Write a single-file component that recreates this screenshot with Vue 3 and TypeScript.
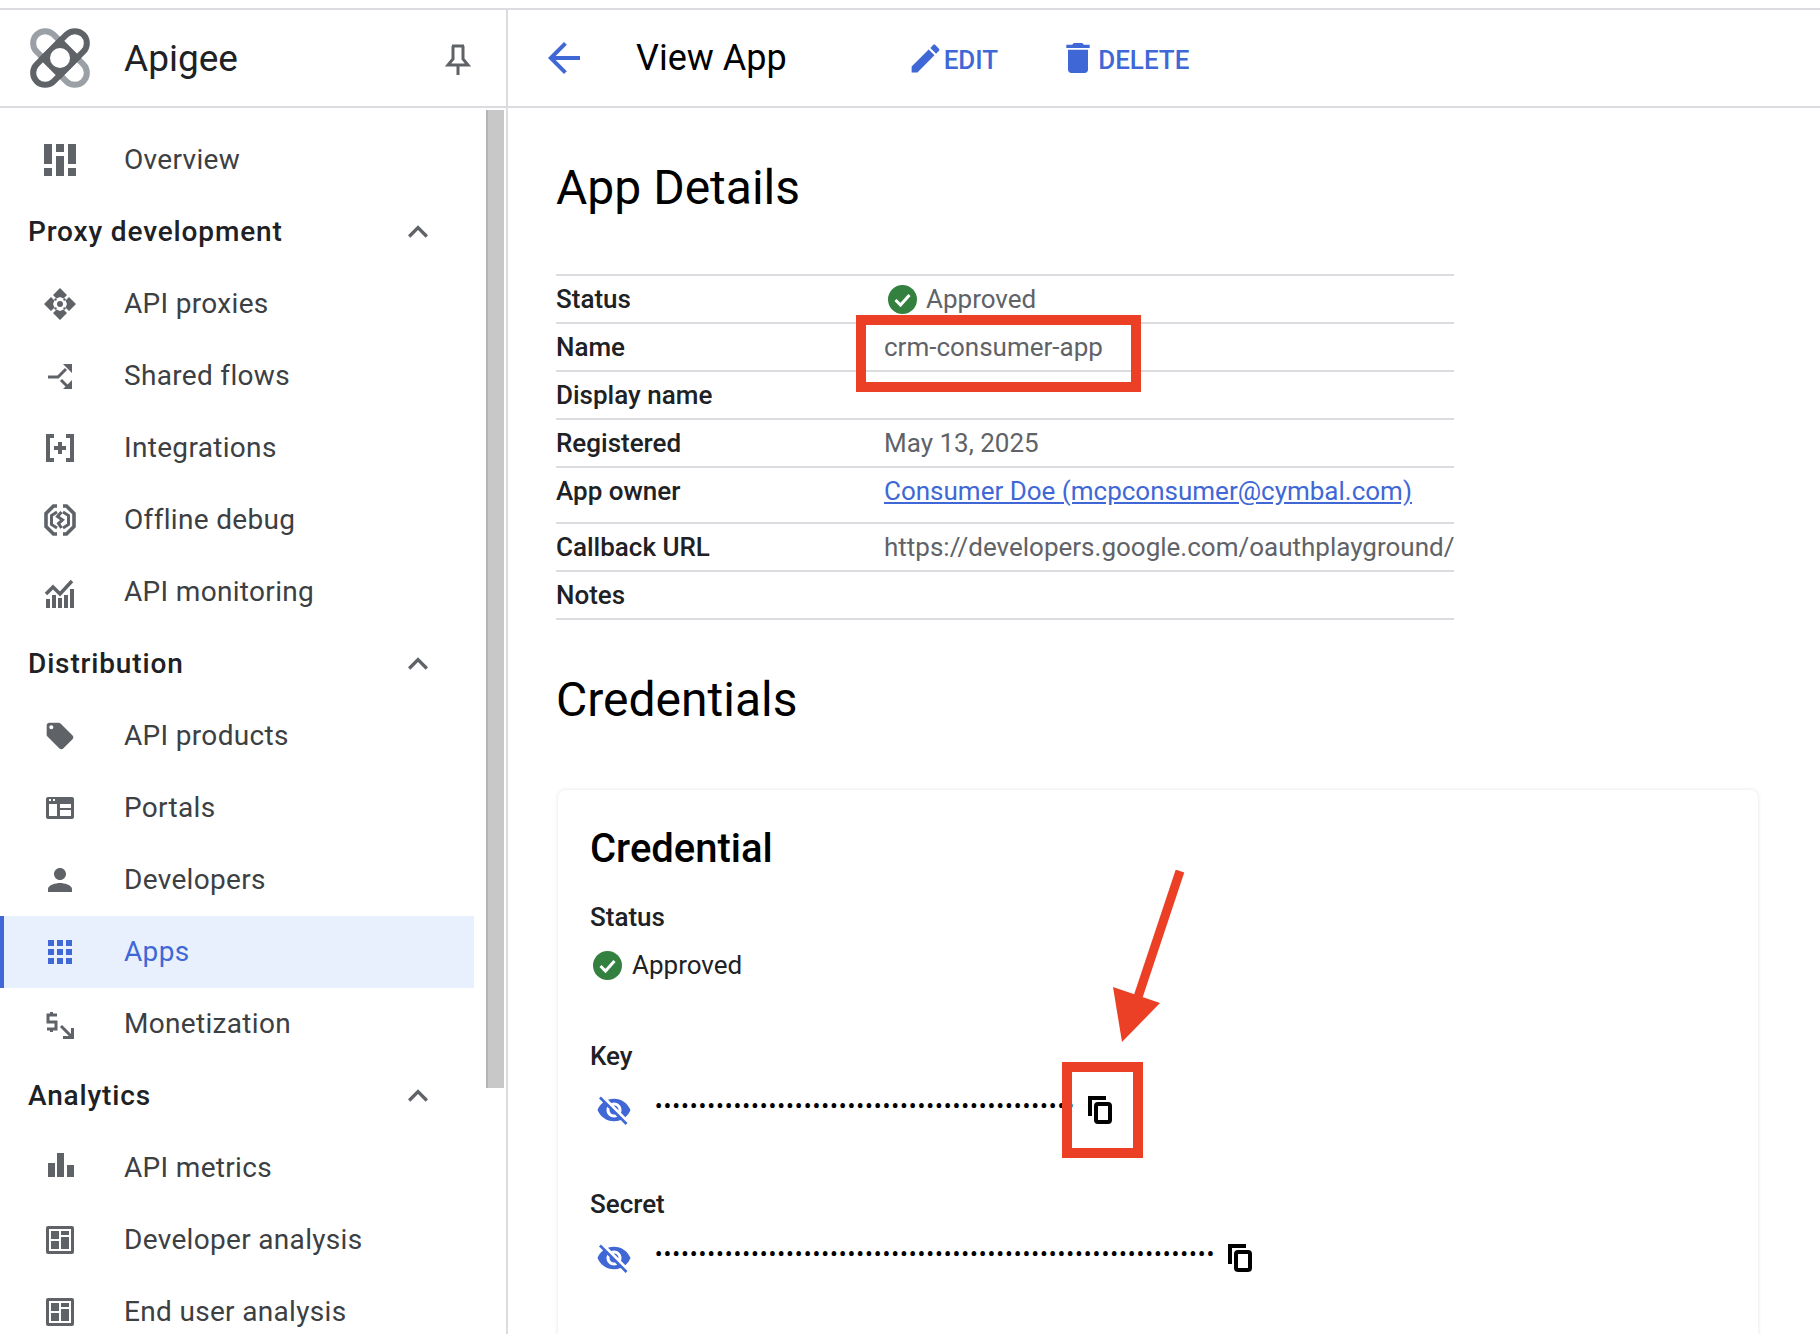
<template>
  <div class="page">
    <div class="layout">
      <aside class="sidenav">
        <div class="brand">
          <svg class="logo" width="60" height="60" viewBox="0 0 60 60" fill="none">
            <rect x="-33" y="-12" width="66" height="24" rx="12" transform="translate(30 30) rotate(45)" stroke="#9aa0a6" stroke-width="6" />
            <rect x="-33" y="-12" width="66" height="24" rx="12" transform="translate(30 30) rotate(-45)" stroke="#5f6368" stroke-width="6" />
            <rect x="-15" y="-15" width="30" height="30" transform="translate(30 30) rotate(45)" fill="#5f6368" />
            <circle cx="30" cy="30" r="10" fill="#fff" />
          </svg>
          <span class="brand-name">Apigee</span>
          <svg class="pin" width="28" height="34" viewBox="0 0 28 34" fill="none" stroke="#5f6368" stroke-width="3">
            <path d="M8 3h12M9 3v13l-5 6h20l-5-6V3M14 22v10" />
          </svg>
        </div>
        <div class="nav-wrap">
          <nav class="nav">
            <template v-for="item in navItems" :key="item.label">
              <div v-if="item.section" class="nav-section">
                <span>{{ item.label }}</span>
                <svg width="40" height="40" viewBox="0 0 24 24" fill="#5f6368">
                  <path d="M12 8l-6 6 1.41 1.41L12 10.83l4.59 4.58L18 14z" />
                </svg>
              </div>
              <div v-else class="nav-item" :class="{ active: item.active }">
                <span class="nav-icon">
                  <svg :width="item.size ?? 32" :height="item.size ?? 32" :viewBox="item.box ?? '0 0 32 32'" fill="currentColor" v-html="item.icon"></svg>
                </span>
                <span class="nav-label">{{ item.label }}</span>
              </div>
            </template>
          </nav>
          <div class="scrollbar"></div>
        </div>
      </aside>

      <main class="main">
        <header class="toolbar">
          <svg class="back" width="48" height="48" viewBox="0 0 24 24" fill="#3f68d6">
            <path d="M20 11H7.83l5.59-5.59L12 4l-8 8 8 8 1.41-1.41L7.83 13H20v-2z" />
          </svg>
          <h2 class="page-title">View App</h2>
          <button class="action edit">
            <svg width="37" height="37" viewBox="0 0 24 24" fill="#3f68d6">
              <path d="M3 17.25V21h3.75L17.81 9.94l-3.75-3.75L3 17.25zM20.71 7.04c.39-.39.39-1.02 0-1.41l-2.34-2.34c-.39-.39-1.02-.39-1.41 0l-1.83 1.83 3.75 3.75 1.83-1.83z" />
            </svg>
            <span>EDIT</span>
          </button>
          <button class="action delete">
            <svg width="40" height="40" viewBox="0 0 24 24" fill="#3f68d6">
              <path d="M6 19c0 1.1.9 2 2 2h8c1.1 0 2-.9 2-2V7H6v12zM19 4h-3.5l-1-1h-5l-1 1H5v2h14V4z" />
            </svg>
            <span>DELETE</span>
          </button>
        </header>

        <section class="content">
          <h1 class="heading first">App Details</h1>
          <div class="details">
            <div v-for="row in detailRows" :key="row.label" class="detail-row" :class="{ tall: row.link }">
              <span class="detail-label">{{ row.label }}</span>
              <span v-if="row.approved" class="detail-value status">
                <svg class="check" width="29" height="29" viewBox="0 0 29 29">
                  <circle cx="14.5" cy="14.5" r="14.5" fill="#34803f" />
                  <path d="M7.5 15l5 5 9-10" fill="none" stroke="#fff" stroke-width="3" />
                </svg>
                {{ row.value }}
              </span>
              <a v-else-if="row.link" class="detail-value owner-link">{{ row.value }}</a>
              <span v-else class="detail-value">{{ row.value }}</span>
            </div>
          </div>

          <h1 class="heading second">Credentials</h1>

          <div class="card">
            <h3 class="card-title">Credential</h3>
            <div class="field-label status-label">Status</div>
            <div class="card-status">
              <svg width="29" height="29" viewBox="0 0 29 29">
                <circle cx="14.5" cy="14.5" r="14.5" fill="#34803f" />
                <path d="M7.5 15l5 5 9-10" fill="none" stroke="#fff" stroke-width="3" />
              </svg>
              Approved
            </div>
            <template v-for="cred in credentials" :key="cred.label">
              <div class="field-label cred-label">{{ cred.label }}</div>
              <div class="cred-row">
                <svg class="eye" width="36" height="36" viewBox="0 0 24 24" fill="#3f68d6">
                  <path d="M12 7c2.76 0 5 2.24 5 5 0 .65-.13 1.26-.36 1.83l2.92 2.92c1.51-1.26 2.7-2.89 3.43-4.75-1.73-4.39-6-7.5-11-7.5-1.4 0-2.74.25-3.98.7l2.16 2.16C10.74 7.13 11.35 7 12 7zM2 4.27l2.28 2.28.46.46C3.08 8.3 1.78 10.02 1 12c1.73 4.39 6 7.5 11 7.5 1.55 0 3.03-.3 4.38-.84l.42.42L19.73 22 21 20.73 3.27 3 2 4.27zM7.53 9.8l1.55 1.55c-.05.21-.08.43-.08.65 0 1.66 1.34 3 3 3 .22 0 .44-.03.65-.08l1.55 1.55c-.67.33-1.41.53-2.2.53-2.76 0-5-2.24-5-5 0-.79.2-1.53.53-2.2zm4.31-.78l3.15 3.15.02-.16c0-1.66-1.34-3-3-3l-.17.01z" />
                </svg>
                <span class="dots">{{ '•'.repeat(cred.dots) }}</span>
                <svg class="copy" width="24" height="28" viewBox="0 0 24 28" fill="none" stroke="#000" stroke-width="4">
                  <path d="M2 20V2h16" />
                  <rect x="8" y="8" width="14" height="18" rx="2" />
                </svg>
              </div>
            </template>
          </div>
        </section>

        <!-- annotations drawn over the screenshot -->
        <div class="mark mark-name"></div>
        <div class="mark mark-copy"></div>
        <svg class="arrow" width="80" height="180" viewBox="0 0 80 180">
          <path d="M67 1L24 130" stroke="#ec4026" stroke-width="9" fill="none" />
          <path d="M0 117L47 133L9 172z" fill="#ec4026" />
        </svg>
      </main>
    </div>
  </div>
</template>

<script setup lang="ts">
interface NavItem {
  label: string
  section?: boolean
  active?: boolean
  icon?: string
  size?: number
  box?: string
}

interface DetailRow {
  label: string
  value: string
  approved?: boolean
  link?: boolean
}

const analysisIcon =
  '<path fill-rule="evenodd" d="M4 2h24a2 2 0 0 1 2 2v24a2 2 0 0 1-2 2H4a2 2 0 0 1-2-2V4a2 2 0 0 1 2-2zM5 5v22h22V5z"/><rect x="7" y="7" width="8" height="8"/><rect x="7" y="17" width="8" height="8"/><rect x="17" y="7" width="8" height="4"/><rect x="17" y="13" width="8" height="12"/>'

const navItems: NavItem[] = [
  {
    label: 'Overview',
    icon: '<rect x="0" y="0" width="8" height="20"/><rect x="0" y="24" width="8" height="8"/><rect x="12" y="0" width="8" height="8"/><rect x="12" y="12" width="8" height="20"/><rect x="24" y="0" width="8" height="20"/><rect x="24" y="24" width="8" height="8"/>',
  },
  { label: 'Proxy development', section: true },
  {
    label: 'API proxies',
    icon: '<path d="M16 0l7 7-3.500 3.500L16 9l-3.500 1.500L9 7zM16 32l-7-7 3.500-3.500L16 23l3.500-1.500L23 25zM0 16l7-7 3.500 3.500L9 16l1.500 3.500L7 23zM32 16l-7 7-3.500-3.500L23 16l-1.500-3.500L25 9z"/><circle cx="16" cy="16" r="3"/><circle cx="11.500" cy="11.500" r="1.200"/><circle cx="20.500" cy="11.500" r="1.200"/><circle cx="11.500" cy="20.500" r="1.200"/><circle cx="20.500" cy="20.500" r="1.200"/>',
  },
  {
    label: 'Shared flows',
    icon: '<path d="M4 17h10l8-8M17 20l6 6" fill="none" stroke="currentColor" stroke-width="3"/><path d="M19 4h9v9zM28 20v9h-9z"/>',
  },
  {
    label: 'Integrations',
    icon: '<path d="M10 4H4v24h6M22 4h6v24h-6M16 10v12M10 16h12" fill="none" stroke="currentColor" stroke-width="4"/>',
  },
  {
    label: 'Offline debug',
    icon: '<path d="M13 2H9.500L2 9.500v13L9.500 30H13M19 2h3.500L30 9.500v13L22.500 30H19" fill="none" stroke="currentColor" stroke-width="3.600"/><path d="M13 8L7.500 11.500v9L13 24M19 8l5.500 3.500v9L19 24" fill="none" stroke="currentColor" stroke-width="3"/><path d="M17.500 8l-4 4.500 5 3.500-4 3.500 3 4.500" fill="none" stroke="currentColor" stroke-width="3"/>',
  },
  {
    label: 'API monitoring',
    icon: '<path d="M2 18l7-7 7 7 12-13" fill="none" stroke="currentColor" stroke-width="3.500"/><rect x="2" y="23" width="4" height="9"/><rect x="8" y="19" width="4" height="13"/><rect x="14" y="22" width="4" height="10"/><rect x="20" y="19" width="4" height="13"/><rect x="26" y="13" width="4" height="19"/>',
  },
  { label: 'Distribution', section: true },
  {
    label: 'API products',
    box: '0 0 24 24',
    icon: '<path d="M21.410 11.580l-9-9C12.050 2.220 11.550 2 11 2H4c-1.100 0-2 .900-2 2v7c0 .550.220 1.050.590 1.420l9 9c.360.360.860.580 1.410.580.550 0 1.050-.220 1.410-.590l7-7c.370-.360.590-.860.590-1.410 0-.550-.230-1.060-.590-1.420zM5.500 7C4.670 7 4 6.330 4 5.500S4.670 4 5.500 4 7 4.670 7 5.500 6.330 7 5.500 7z"/>',
  },
  {
    label: 'Portals',
    icon: '<path fill-rule="evenodd" d="M4 5h24a2 2 0 0 1 2 2v18a2 2 0 0 1-2 2H4a2 2 0 0 1-2-2V7a2 2 0 0 1 2-2zM5 12v12h8V12zM16 12v4h11v-4zM16 18v6h11v-6zM5 7v2h2V7zM9 7v2h2V7z"/>',
  },
  {
    label: 'Developers',
    size: 36,
    box: '0 0 24 24',
    icon: '<path d="M12 12c2.210 0 4-1.790 4-4s-1.790-4-4-4-4 1.790-4 4 1.790 4 4 4zm0 2c-2.670 0-8 1.340-8 4v2h16v-2c0-2.660-5.330-4-8-4z"/>',
  },
  {
    label: 'Apps',
    active: true,
    icon: '<rect x="4" y="4" width="6" height="6"/><rect x="13" y="4" width="6" height="6"/><rect x="22" y="4" width="6" height="6"/><rect x="4" y="13" width="6" height="6"/><rect x="13" y="13" width="6" height="6"/><rect x="22" y="13" width="6" height="6"/><rect x="4" y="22" width="6" height="6"/><rect x="13" y="22" width="6" height="6"/><rect x="22" y="22" width="6" height="6"/>',
  },
  {
    label: 'Monetization',
    icon: '<path d="M13 7H4v7h8v7H3M7.500 4v3M7.500 21v3M17 18l10 10M28.500 20v9.500H19" fill="none" stroke="currentColor" stroke-width="3"/>',
  },
  { label: 'Analytics', section: true },
  {
    label: 'API metrics',
    icon: '<rect x="4" y="11" width="7" height="14"/><rect x="13" y="1" width="7" height="24"/><rect x="23" y="13" width="7" height="12"/>',
  },
  { label: 'Developer analysis', icon: analysisIcon },
  { label: 'End user analysis', icon: analysisIcon },
]

const detailRows: DetailRow[] = [
  { label: 'Status', value: 'Approved', approved: true },
  { label: 'Name', value: 'crm-consumer-app' },
  { label: 'Display name', value: '' },
  { label: 'Registered', value: 'May 13, 2025' },
  { label: 'App owner', value: 'Consumer Doe (mcpconsumer@cymbal.com)', link: true },
  { label: 'Callback URL', value: 'https://developers.google.com/oauthplayground/' },
  { label: 'Notes', value: '' },
]

const credentials = [
  { label: 'Key', dots: 48 },
  { label: 'Secret', dots: 64 },
]
</script>

<style scoped>
.page {
  height: 1334px;
  overflow: hidden;
  padding-top: 8px;
  box-sizing: border-box;
  background: #fff;
  font-family: Roboto, "Liberation Sans", sans-serif;
  color: #202124;
}

.layout {
  display: flex;
  height: 100%;
  border-top: 2px solid #dadce0;
}

.sidenav {
  width: 508px;
  flex: none;
  box-sizing: border-box;
  border-right: 2px solid #dadce0;
}

.brand {
  height: 98px;
  box-sizing: border-box;
  display: flex;
  align-items: center;
  padding: 0 34px 0 30px;
  border-bottom: 2px solid #dadce0;
}

.brand-name {
  margin-left: 34px;
  font-size: 37px;
  flex: 1;
}

.pin {
  margin-top: 4px;
}

.nav-wrap {
  display: flex;
}

.nav {
  width: 474px;
  flex: none;
  padding-top: 16px;
}

.nav-item,
.nav-section {
  height: 72px;
  display: flex;
  align-items: center;
  box-sizing: border-box;
}

.nav-item {
  font-size: 28px;
  letter-spacing: 0.32px;
  color: #3c4043;
}

.nav-label {
  padding-bottom: 2px;
}

.nav-icon {
  width: 32px;
  margin: 0 48px 0 44px;
  flex: none;
  display: flex;
  justify-content: center;
  color: #5f6368;
}

.nav-icon svg {
  flex: none;
}

.nav-item.active {
  background: #e8f0fe;
  color: #3f68d6;
  box-shadow: inset 4px 0 0 #3f68d6;
}

.nav-item.active .nav-icon {
  color: #3f68d6;
}

.nav-section {
  padding-left: 28px;
  padding-right: 36px;
  font-size: 28px;
  font-weight: 500;
  letter-spacing: 0.85px;
  justify-content: space-between;
}

.nav-section span {
  padding-bottom: 2px;
}

.scrollbar {
  width: 18px;
  height: 978px;
  margin: 2px 0 0 12px;
  box-sizing: border-box;
  background: #c8c8c8;
  border-left: 2px solid #b4b4b4;
}

.main {
  flex: 1;
  position: relative;
  min-width: 0;
}

.toolbar {
  height: 98px;
  box-sizing: border-box;
  display: flex;
  align-items: center;
  padding-left: 32px;
  border-bottom: 2px solid #dadce0;
}

.page-title {
  margin: 0 0 0 48px;
  font-size: 36px;
  font-weight: 400;
  color: #000;
}

.action {
  display: flex;
  align-items: center;
  padding: 0;
  border: 0;
  background: none;
  font-family: inherit;
  font-size: 26px;
  font-weight: 500;
  color: #3f68d6;
}

.action span {
  margin-top: 3px;
}

.edit {
  margin-left: 120px;
}

.delete {
  margin-left: 60px;
}

.content {
  padding-left: 48px;
}

.heading {
  margin: 0;
  font-size: 48px;
  line-height: 56px;
  font-weight: 400;
  color: #000;
}

.first {
  margin-top: 52px;
}

.second {
  margin-top: 52px;
}

.details {
  width: 898px;
  margin-top: 58px;
  border-top: 2px solid #dadce0;
}

.detail-row {
  height: 48px;
  box-sizing: border-box;
  display: flex;
  align-items: center;
  border-bottom: 2px solid #dadce0;
  font-size: 26px;
}

.detail-row.tall {
  height: 56px;
  padding-bottom: 8px;
}

.detail-label {
  width: 328px;
  flex: none;
  font-weight: 500;
  color: #202124;
}

.detail-value {
  color: #5f6368;
  white-space: nowrap;
}

.status {
  display: flex;
  align-items: center;
  gap: 9px;
  margin-left: 4px;
}

.owner-link {
  color: #3f68d6;
  text-decoration: underline;
}

.card {
  width: 1200px;
  height: 700px;
  margin: 62px 0 0 2px;
  padding: 37px 0 0 32px;
  box-sizing: border-box;
  border-radius: 8px;
  box-shadow: 0 0 4px rgba(60, 64, 67, 0.14);
}

.card-title {
  margin: 0;
  font-size: 40px;
  line-height: 44px;
  font-weight: 500;
  color: #000;
}

.field-label {
  font-size: 26px;
  line-height: 32px;
  font-weight: 500;
}

.status-label {
  margin-top: 30px;
}

.card-status {
  height: 32px;
  margin-top: 16px;
  display: flex;
  align-items: center;
  gap: 10px;
  padding-left: 3px;
  font-size: 26px;
}

.cred-label {
  margin-top: 60px;
}

.card-status + .cred-label {
  margin-top: 59px;
}

.cred-row {
  display: flex;
  align-items: flex-start;
  margin-top: 20px;
  margin-left: 6px;
}

.dots {
  margin: 1px 12.5px 0 23px;
  font-size: 20px;
  line-height: 26px;
  letter-spacing: 1.57px;
  font-weight: 700;
  color: #000;
}

.copy {
  margin-top: 4px;
}

.mark {
  position: absolute;
  box-sizing: border-box;
  border: 10px solid #ec4026;
}

.mark-name {
  left: 348px;
  top: 305px;
  width: 285px;
  height: 77px;
}

.mark-copy {
  left: 554px;
  top: 1052px;
  width: 81px;
  height: 96px;
}

.arrow {
  position: absolute;
  left: 605px;
  top: 860px;
}
</style>
